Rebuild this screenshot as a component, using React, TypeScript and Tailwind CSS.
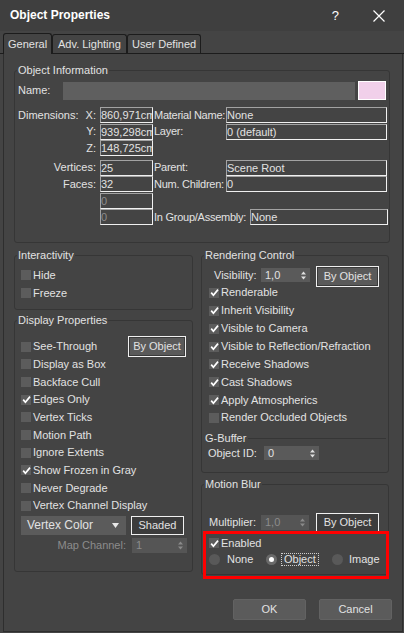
import React from "react";

const font = "font-['Liberation_Sans',Arial,sans-serif]";

const CheckBox = ({ checked }: { checked?: boolean }) => (
  <span className="w-[10px] h-[10px] bg-[#5c5c5c] flex items-center justify-center shrink-0">
    {checked && (
      <svg width="9" height="9" viewBox="0 0 9 9">
        <path d="M1.2 4.6 L3.4 7.2 L8 1.6" stroke="#ffffff" strokeWidth="1.7" fill="none" />
      </svg>
    )}
  </span>
);

const CheckRow = ({ label, checked, h }: { label: string; checked?: boolean; h: string }) => (
  <div className={`flex items-center gap-[2px] ${h}`}>
    <CheckBox checked={checked} />
    <span className="whitespace-nowrap">{label}</span>
  </div>
);

const Arrows = ({ dim }: { dim?: boolean }) => (
  <svg width="5" height="9" viewBox="0 0 5 9" className="mr-[4px]">
    <path d="M0 3.5 L2.5 0.5 L5 3.5 Z" fill={dim ? "#8a8a8a" : "#e0e0e0"} />
    <path d="M0 5.5 L2.5 8.5 L5 5.5 Z" fill={dim ? "#8a8a8a" : "#e0e0e0"} />
  </svg>
);

const Spinner = ({ value, cls, dim }: { value: string; cls: string; dim?: boolean }) => (
  <div className={`flex items-center justify-between ${dim ? "bg-[#555555] text-[#8c8c8c]" : "bg-[#5a5a5a]"} ${cls}`}>
    <span className="pl-[4px]">{value}</span>
    <Arrows dim={dim} />
  </div>
);

const Box = ({ value, w, dim }: { value?: string; w: string; dim?: boolean }) => (
  <div
    className={`${w} h-[16px] border border-t-[#a3a3a3] border-l-[#a3a3a3] border-b-[#f0f0f0] border-r-[#f0f0f0] overflow-hidden whitespace-nowrap leading-[14px] ${
      dim ? "text-[#8c8c8c]" : ""
    }`}
  >
    {value}
  </div>
);

const InfoRow = ({
  first,
  axis,
  v1,
  dim,
  l2,
  v2,
  l2w = "w-[73px]",
  v2w = "w-[161px]",
}: {
  first?: string;
  axis?: string;
  v1: string;
  dim?: boolean;
  l2?: string;
  v2?: string;
  l2w?: string;
  v2w?: string;
}) => (
  <div className="flex items-center h-[16px]">
    <div className="w-[82px] flex justify-between pr-[4px]">
      <span>{first}</span>
      <span>{axis}</span>
    </div>
    <Box value={v1} w="w-[53px]" dim={dim} />
    {l2 && (
      <>
        <span className={`${l2w} pl-[1px] whitespace-nowrap tracking-[-0.25px]`}>{l2}</span>
        <Box value={v2} w={v2w} />
      </>
    )}
  </div>
);

const Legend = ({ children }: { children: React.ReactNode }) => (
  <legend className="ml-[2px] px-[1px] leading-[13px]">{children}</legend>
);

const groupCls = "border border-[#363636] rounded-[3px]";

const Radio = ({ on }: { on?: boolean }) => (
  <span
    className={`w-[11px] h-[11px] rounded-full flex items-center justify-center shrink-0 ${
      on ? "bg-[#6a6a6a]" : "bg-[#595959]"
    }`}
  >
    {on && <span className="w-[5px] h-[5px] rounded-full bg-white" />}
  </span>
);

export default function App() {
  const dispRows: [string, boolean][] = [
    ["Display as Box", false],
    ["Backface Cull", false],
    ["Edges Only", true],
    ["Vertex Ticks", false],
    ["Motion Path", false],
    ["Ignore Extents", false],
    ["Show Frozen in Gray", true],
    ["Never Degrade", false],
    ["Vertex Channel Display", false],
  ];
  const renderRows: [string, boolean][] = [
    ["Renderable", true],
    ["Inherit Visibility", true],
    ["Visible to Camera", true],
    ["Visible to Reflection/Refraction", true],
    ["Receive Shadows", true],
    ["Cast Shadows", true],
    ["Apply Atmospherics", true],
    ["Render Occluded Objects", false],
  ];

  return (
    <div
      className={`relative w-[404px] h-[633px] bg-[#444444] text-[#e2e2e2] text-[11px] leading-[13px] ${font} overflow-hidden flex flex-col`}
    >
      {/* title bar */}
      <div className="h-[31px] shrink-0 flex items-center bg-[#3f3f3f]">
        <span className="ml-[10px] font-bold text-[12px] text-white">Object Properties</span>
        <span className="ml-auto text-[13px] text-white">?</span>
        <svg width="12" height="12" viewBox="0 0 12 12" className="ml-[34px] mr-[19px]">
          <path d="M0.5 0.5 L11.5 11.5 M11.5 0.5 L0.5 11.5" stroke="#ffffff" strokeWidth="1.2" />
        </svg>
      </div>

      {/* tabs */}
      <div className="h-[23px] shrink-0 flex items-end pl-[3px] border-b border-[#1c1c1c] whitespace-nowrap">
        <div className="w-[49px] h-[21px] -mb-px bg-[#444444] border border-b-0 border-[#1c1c1c] rounded-t-[3px] px-[4px] flex items-center">
          General
        </div>
        <div className="w-[75px] h-[19px] border border-b-0 border-[#1c1c1c] rounded-t-[3px] px-[5px] flex items-center">
          Adv. Lighting
        </div>
        <div className="w-[74px] h-[19px] border border-b-0 border-[#1c1c1c] rounded-t-[3px] px-[4px] flex items-center">
          User Defined
        </div>
      </div>

      {/* pane */}
      <div className="flex-1 ml-[3px] mr-[1px] mb-[1px] border-l border-r border-b border-[#2e2e2e] flex flex-col">
        <fieldset className={`ml-[10px] mt-[10px] w-[376px] ${groupCls} pb-[17px]`}>
          <Legend>Object Information</Legend>
          <div className="pl-[3px]">
            <div className="mt-[4px] h-[19px] flex items-center">
              <span className="w-[45px]">Name:</span>
              <div className="w-[292px] h-[18px] bg-[#5f5f5f]" />
              <div className="ml-[3px] w-[28px] h-[19px] border border-white bg-[#f1d0ea]" />
            </div>
            <div className="mt-[7px] flex flex-col gap-[0.5px]">
              <InfoRow first="Dimensions:" axis="X:" v1="860,971cm" l2="Material Name:" v2="None" />
              <InfoRow axis="Y:" v1="939,298cm" l2="Layer:" v2="0 (default)" />
              <InfoRow axis="Z:" v1="148,725cm" />
              <div className="h-[2.5px]" />
              <InfoRow axis="Vertices:" v1="25" l2="Parent:" v2="Scene Root" />
              <InfoRow axis="Faces:" v1="32" l2="Num. Children:" v2="0" />
              <InfoRow v1="0" dim />
              <InfoRow v1="0" dim l2="In Group/Assembly:" v2="None" l2w="w-[97px]" v2w="w-[138px]" />
            </div>
          </div>
        </fieldset>

        <div className="flex mt-[6px]">
          {/* left column */}
          <div className="ml-[10px] w-[179px] flex flex-col">
            <fieldset className={`${groupCls} pb-[7px]`}>
              <Legend>Interactivity</Legend>
              <div className="pl-[6px] mt-[4px]">
                <CheckRow label="Hide" h="h-[18px]" />
                <CheckRow label="Freeze" h="h-[18px]" />
              </div>
            </fieldset>

            <fieldset className={`${groupCls} mt-[4px] pb-[18px]`}>
              <Legend>Display Properties</Legend>
              <div className="pl-[6px] mt-[11px]">
                <div className="flex items-center h-[17.67px]">
                  <CheckBox />
                  <span className="ml-[2px]">See-Through</span>
                  <div className="ml-auto mr-[6px] w-[58px] h-[21px] bg-[#5a5a5a] border border-[#f0f0f0] shadow-[inset_0_0_0_1px_#3a3a3a] flex items-center justify-center">
                    By Object
                  </div>
                </div>
                {dispRows.map(([l, c]) => (
                  <CheckRow key={l} label={l} checked={c} h="h-[17.67px]" />
                ))}
                <div className="mt-[1px] h-[19px] flex items-center">
                  <div className="w-[105px] h-[19px] bg-[#5b5b5b] flex items-center justify-between pl-[6px] pr-[7px] text-[12px]">
                    <span>Vertex Color</span>
                    <svg width="7" height="5" viewBox="0 0 7 5">
                      <path d="M0 0 L7 0 L3.5 5 Z" fill="#e8e8e8" />
                    </svg>
                  </div>
                  <div className="ml-[5px] w-[53px] h-[19px] bg-[#3c3c3c] border border-[#f0f0f0] flex items-center justify-center">
                    Shaded
                  </div>
                </div>
                <div className="mt-[3px] h-[15px] flex items-center">
                  <span className="w-[105px] text-right text-[#8c8c8c]">Map Channel:</span>
                  <Spinner value="1" dim cls="ml-[6px] w-[55px] h-[15px]" />
                </div>
              </div>
            </fieldset>
          </div>

          {/* right column */}
          <div className="ml-[8px] w-[188px] flex flex-col">
            <fieldset className={`${groupCls} pb-[12px]`}>
              <Legend>Rendering Control</Legend>
              <div className="mt-[4px] h-[21px] flex items-start pl-[12px]">
                <span className="w-[47px] mt-[2px] leading-[14px]">Visibility:</span>
                <Spinner value="1,0" cls="mt-[2px] w-[49px] h-[14px]" />
                <div className="ml-[6px] w-[63px] h-[21px] bg-[#5a5a5a] border border-[#f0f0f0] shadow-[inset_0_0_0_1px_#3a3a3a] flex items-center justify-center">
                  By Object
                </div>
              </div>
              <div className="-mt-[3px] pl-[7px]">
                {renderRows.map(([l, c]) => (
                  <CheckRow key={l} label={l} checked={c} h="h-[17.86px]" />
                ))}
              </div>
              <div className="mt-[5.5px] h-[13px] flex items-center">
                <span className="ml-[3px]">G-Buffer</span>
                <div className="flex-1 h-px bg-[#363636] ml-[2px] mr-[2px]" />
              </div>
              <div className="mt-[1px] h-[14px] flex items-center pl-[6px]">
                <span className="w-[56px]">Object ID:</span>
                <Spinner value="0" cls="w-[55px] h-[14px]" />
              </div>
            </fieldset>

            <fieldset className={`${groupCls} mt-[5px] pb-[7.5px]`}>
              <Legend>Motion Blur</Legend>
              <div className="mt-[21.5px] h-[19px] flex items-center pl-[7px]">
                <span className="w-[52px]">Multiplier:</span>
                <Spinner value="1,0" dim cls="w-[48px] h-[15px]" />
                <div className="ml-[7px] w-[63px] h-[19px] bg-[#3c3c3c] border border-[#f0f0f0] flex items-center justify-center">
                  By Object
                </div>
              </div>
              <div className="mt-[4.5px] pl-[7px]">
                <CheckRow label="Enabled" checked h="h-[14px]" />
              </div>
              <div className="mt-[2px] h-[14px] flex items-center pl-[7px]">
                <div className="w-[57px] flex items-center">
                  <Radio />
                  <span className="ml-[7px]">None</span>
                </div>
                <div className="w-[66px] flex items-center">
                  <Radio on />
                  <span className="ml-[4px] px-[2px] border border-dotted border-[#cfcfcf] leading-[11px]">Object</span>
                </div>
                <div className="flex items-center">
                  <Radio />
                  <span className="ml-[6px]">Image</span>
                </div>
              </div>
            </fieldset>
          </div>
        </div>

        <div className="mt-[24px] flex justify-end gap-[13px] pr-[10px]">
          <div className="w-[73px] h-[21px] bg-[#5b5b5b] border border-[#626262] rounded-[2px] flex items-center justify-center">
            OK
          </div>
          <div className="w-[73px] h-[21px] bg-[#5b5b5b] border border-[#626262] rounded-[2px] flex items-center justify-center">
            Cancel
          </div>
        </div>
      </div>

      {/* red annotation */}
      <div className="absolute left-[203px] top-[531px] w-[186px] h-[48px] border-[3px] border-[#ff0000]" />
    </div>
  );
}
